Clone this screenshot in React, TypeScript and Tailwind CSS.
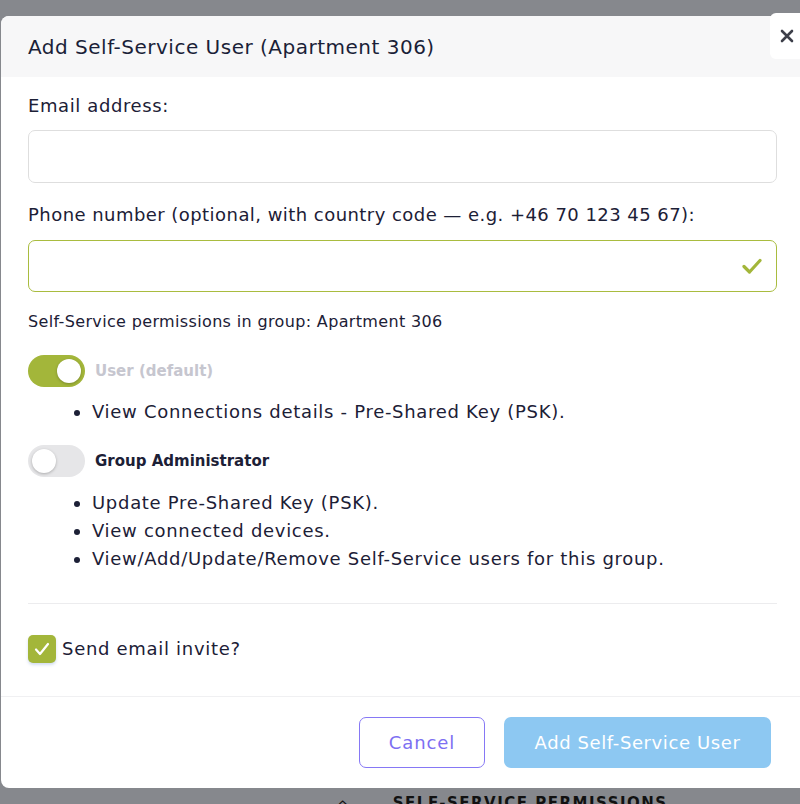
import React from 'react';

const font = { fontFamily: '"DejaVu Sans", "Liberation Sans", sans-serif' };

const Toggle = ({ on }: { on: boolean }) => (
  <div
    className={`flex h-[32px] w-[57px] items-center rounded-full px-[4px] ${
      on ? 'justify-end bg-[#a3b63a]' : 'justify-start bg-[#e6e6e8]'
    }`}
  >
    <div className="h-[24px] w-[24px] rounded-full bg-white shadow-[0_1px_3px_rgba(0,0,0,0.25)]" />
  </div>
);

const Bullets = ({ items, leading }: { items: string[]; leading: string }) => (
  <ul className={`list-disc pl-[64px] text-[18px] tracking-[0.7px] text-[#1c2036] ${leading}`}>
    {items.map((item) => (
      <li key={item}>{item}</li>
    ))}
  </ul>
);

export default function App() {
  return (
    <div
      className="relative h-[804px] w-[800px] overflow-hidden bg-[#86888d]"
      style={font}
    >
      <div className="ml-px mt-[16px] w-[812px] overflow-hidden rounded-[8px] bg-white">
        <div className="flex h-[61px] items-center bg-[#f7f7f8] px-[27px]">
          <h2 className="text-[20px] tracking-[0.5px] text-[#1b1f38]">
            Add Self-Service User (Apartment 306)
          </h2>
        </div>

        <div className="w-[799px] pl-[27px] pr-[23px] pt-[17px]">
          <label className="block text-[18px] leading-[24px] tracking-[0.6px] text-[#1c2036]">
            Email address:
          </label>
          <div className="mt-[12px] h-[53px] rounded-[7px] border border-[#dedede] bg-white" />

          <label className="mt-[20px] block text-[18px] leading-[24px] tracking-[0.45px] text-[#1c2036]">
            Phone number (optional, with country code — e.g. +46 70 123 45 67):
          </label>
          <div className="mt-[13px] flex h-[52px] items-center justify-end rounded-[7px] border border-[#a9bc3f] bg-white pr-[14px]">
            <svg width="20" height="16" viewBox="0 0 20 16" fill="none">
              <path
                d="M2 8.5 L7.5 14 L18 2.5"
                stroke="#a3b63a"
                strokeWidth="3.2"
                strokeLinecap="round"
                strokeLinejoin="round"
              />
            </svg>
          </div>

          <p className="mt-[20px] text-[16px] leading-[20px] tracking-[0.35px] text-[#1c2036]">
            Self-Service permissions in group: Apartment 306
          </p>

          <div className="mt-[23px] flex h-[32px] items-center gap-[10px]">
            <Toggle on />
            <span className="text-[15px] font-bold leading-[20px] text-[#c6c6cf]">User (default)</span>
          </div>
          <div className="mt-[12px]">
            <Bullets leading="leading-[26px]" items={['View Connections details - Pre-Shared Key (PSK).']} />
          </div>

          <div className="mt-[20px] flex h-[32px] items-center gap-[10px]">
            <Toggle on={false} />
            <span className="text-[15px] font-bold leading-[20px] text-[#1c2036]">Group Administrator</span>
          </div>
          <div className="mt-[12px]">
            <Bullets
              leading="leading-[28px]"
              items={[
                'Update Pre-Shared Key (PSK).',
                'View connected devices.',
                'View/Add/Update/Remove Self-Service users for this group.',
              ]}
            />
          </div>

          <div className="mt-[30px] h-px bg-[#ececee]" />

          <div className="mt-[31px] flex h-[28px] items-center gap-[6px]">
            <div className="flex h-[28px] w-[28px] items-center justify-center rounded-[5px] bg-[#a3b63a] shadow-[0_2px_3px_rgba(80,120,200,0.25)]">
              <svg width="16" height="14" viewBox="0 0 16 14" fill="none">
                <path
                  d="M2 7.5 L6 12 L14 2"
                  stroke="white"
                  strokeWidth="2.2"
                  strokeLinecap="round"
                  strokeLinejoin="round"
                />
              </svg>
            </div>
            <span className="text-[18px] leading-[24px] tracking-[0.7px] text-[#1c2036]">Send email invite?</span>
          </div>
          <div className="h-[33px]" />
        </div>

        <div className="flex w-[799px] justify-end gap-[19px] border-t border-[#f0f0f2] pb-[20px] pr-[29px] pt-[20px]">
          <button className="h-[51px] w-[126px] rounded-[7px] border border-[#8678f5] bg-white text-[18px] tracking-[0.9px] text-[#7d6ff2]">
            Cancel
          </button>
          <button className="h-[51px] w-[267px] rounded-[7px] bg-[#8dc8f2] text-[18px] tracking-[0.6px] text-white">
            Add Self-Service User
          </button>
        </div>
      </div>

      <button className="absolute right-0 top-[13px] flex h-[46px] w-[30px] items-center justify-center rounded-l-[6px] bg-white pl-[4px]">
        <svg width="14" height="14" viewBox="0 0 14 14">
          <path d="M2 2 L12 12 M12 2 L2 12" stroke="#3d3f4a" strokeWidth="2.6" strokeLinecap="round" />
        </svg>
      </button>

      <div className="mt-[4px] flex items-center pl-[338px] text-[15px] font-semibold tracking-[1.5px] text-[#111]">
        <span className="mr-[44px] text-[13px]">⌂</span>
        SELF-SERVICE PERMISSIONS
      </div>
    </div>
  );
}
